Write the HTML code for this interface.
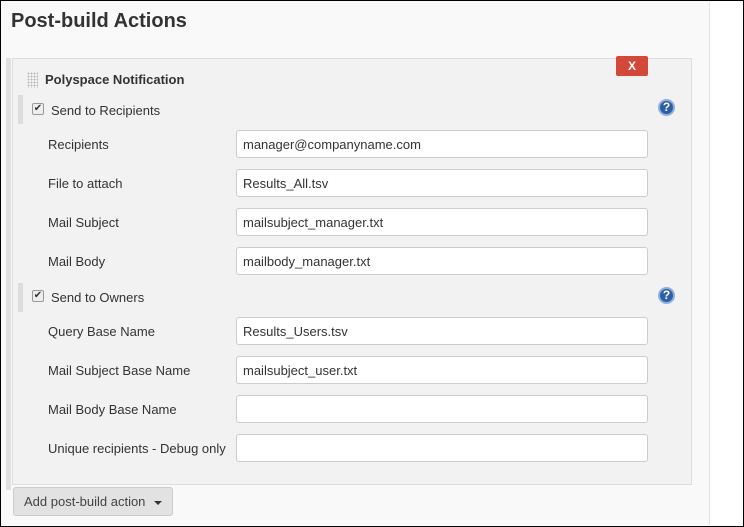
<!DOCTYPE html>
<html><head><style>
*{box-sizing:border-box;margin:0;padding:0}
body{width:744px;height:527px;overflow:hidden;font-family:"Liberation Sans",Arial,sans-serif;font-size:13px;color:#333;background:#fff}
.frame{position:absolute;left:0;top:0;width:744px;height:527px;border:1px solid #000;background:#fff}
.main{position:absolute;left:1px;top:1px;width:709px;height:524px;background:#f9f9f9;border-right:1px solid #e4e4e4}
h1{position:absolute;left:11px;top:10px;font-size:20px;font-weight:bold;color:#333}
.lbar{position:absolute;left:6px;top:58px;width:5px;height:432px;background:#e0e0e0}
.panel{position:absolute;left:12px;top:58px;width:680px;height:427px;background:#f2f2f2;border:1px solid #ddd}
.abs{position:absolute}
.grip{left:27px;top:72px;width:11px;height:16px;background-image:radial-gradient(#bbb 45%,transparent 50%);background-size:3px 3px}
.title{left:45px;top:72px;font-weight:bold;font-size:13px}
.x{left:616px;top:56px;width:32px;height:20px;background:#d24939;border-radius:2px;color:#fff;font-weight:bold;text-align:center;line-height:20px;font-size:12px}
.sbar{left:18px;width:5px;height:29px;background:#ddd}
.cb{width:12px;height:12px;border:1px solid #999;border-radius:2px;background:#eee;font-size:10px;line-height:10px;text-align:center;color:#333}
.help{width:17px;height:17px;border-radius:50%;background:#2d5fa3;border:2px solid #8fb0dc;color:#fff;font-weight:bold;font-size:12px;text-align:center;line-height:13px}
.lab{left:48px}
.inp{left:236px;width:412px;height:28px;background:#fff;border:1px solid #ccc;border-radius:3px;padding-left:6px;line-height:28px;color:#333}
.btn{left:13px;top:487px;width:160px;height:29px;background:#e2e2e2;border:1px solid #ccc;border-radius:3px;line-height:27px;padding-left:10px;color:#444}
.caret{display:inline-block;border-left:4px solid transparent;border-right:4px solid transparent;border-top:4px solid #333;margin-left:9px;vertical-align:middle}
</style></head><body>
<div class="frame"></div>
<div class="main"></div>
<h1>Post-build Actions</h1>
<div class="lbar"></div>
<div class="panel"></div>
<div class="abs grip"></div>
<div class="abs title">Polyspace Notification</div>
<div class="abs x">X</div>

<div class="abs sbar" style="top:95px"></div>
<div class="abs cb" style="left:32px;top:103px">✔</div>
<div class="abs" style="left:51px;top:103px">Send to Recipients</div>
<div class="abs help" style="left:658px;top:99px">?</div>

<div class="abs lab" style="top:137px">Recipients</div>
<div class="abs inp" style="top:130px">manager@companyname.com</div>
<div class="abs lab" style="top:176px">File to attach</div>
<div class="abs inp" style="top:169px">Results_All.tsv</div>
<div class="abs lab" style="top:215px">Mail Subject</div>
<div class="abs inp" style="top:208px">mailsubject_manager.txt</div>
<div class="abs lab" style="top:254px">Mail Body</div>
<div class="abs inp" style="top:247px">mailbody_manager.txt</div>

<div class="abs sbar" style="top:283px"></div>
<div class="abs cb" style="left:32px;top:290px">✔</div>
<div class="abs" style="left:51px;top:290px">Send to Owners</div>
<div class="abs help" style="left:658px;top:287px">?</div>

<div class="abs lab" style="top:324px">Query Base Name</div>
<div class="abs inp" style="top:317px">Results_Users.tsv</div>
<div class="abs lab" style="top:363px">Mail Subject Base Name</div>
<div class="abs inp" style="top:356px">mailsubject_user.txt</div>
<div class="abs lab" style="top:402px">Mail Body Base Name</div>
<div class="abs inp" style="top:395px"></div>
<div class="abs lab" style="top:441px">Unique recipients - Debug only</div>
<div class="abs inp" style="top:434px"></div>

<div class="abs btn">Add post-build action<span class="caret"></span></div>
</body></html>
